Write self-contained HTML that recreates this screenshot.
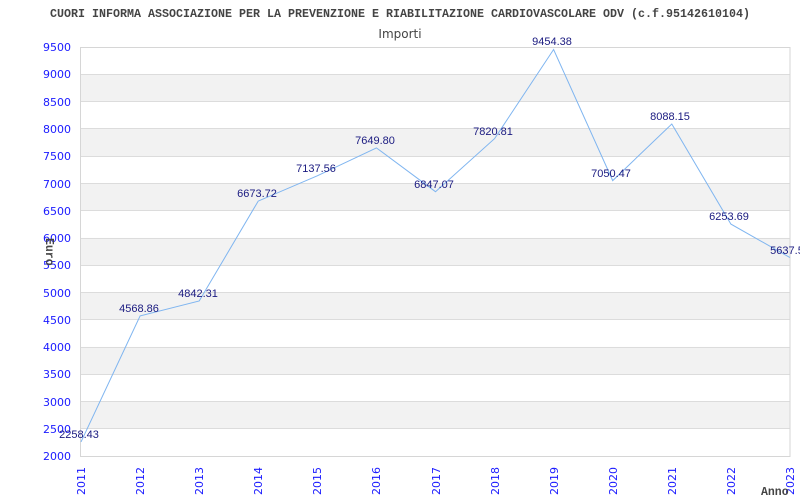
<!DOCTYPE html>
<html><head><meta charset="utf-8"><style>
html,body{margin:0;padding:0;background:#fff;}
svg{display:block;}
</style></head><body>
<svg width="800" height="500" xmlns="http://www.w3.org/2000/svg">
<rect width="800" height="500" fill="#fff"/>
<g fill="#f2f2f2">
<rect x="81" y="74.3" width="709" height="27.3"/>
<rect x="81" y="128.8" width="709" height="27.3"/>
<rect x="81" y="183.3" width="709" height="27.3"/>
<rect x="81" y="237.9" width="709" height="27.3"/>
<rect x="81" y="292.4" width="709" height="27.3"/>
<rect x="81" y="346.9" width="709" height="27.3"/>
<rect x="81" y="401.5" width="709" height="27.3"/>
</g>
<g stroke="#dcdcdc" stroke-width="1">
<line x1="81" x2="790" y1="74.5" y2="74.5"/><line x1="81" x2="790" y1="101.5" y2="101.5"/>
<line x1="81" x2="790" y1="128.5" y2="128.5"/><line x1="81" x2="790" y1="156.5" y2="156.5"/>
<line x1="81" x2="790" y1="183.5" y2="183.5"/><line x1="81" x2="790" y1="210.5" y2="210.5"/>
<line x1="81" x2="790" y1="238.5" y2="238.5"/><line x1="81" x2="790" y1="265.5" y2="265.5"/>
<line x1="81" x2="790" y1="292.5" y2="292.5"/><line x1="81" x2="790" y1="319.5" y2="319.5"/>
<line x1="81" x2="790" y1="347.5" y2="347.5"/><line x1="81" x2="790" y1="374.5" y2="374.5"/>
<line x1="81" x2="790" y1="401.5" y2="401.5"/><line x1="81" x2="790" y1="428.5" y2="428.5"/>
</g>
<rect x="80.5" y="47.5" width="709.5" height="409" fill="none" stroke="#d6d6d6"/>
<text x="400" y="17" text-anchor="middle" font-family="Liberation Mono, monospace" font-size="11.8" font-weight="bold" fill="#444" textLength="700" lengthAdjust="spacingAndGlyphs">CUORI INFORMA ASSOCIAZIONE PER LA PREVENZIONE E RIABILITAZIONE CARDIOVASCOLARE ODV (c.f.95142610104)</text>
<text x="400" y="38" text-anchor="middle" font-family="DejaVu Sans, sans-serif" font-size="12" fill="#444">Importi</text>
<g font-family="DejaVu Sans, sans-serif" font-size="11" fill="#1a1aff" text-anchor="end">
<text x="71" y="51">9500</text><text x="71" y="78">9000</text><text x="71" y="106">8500</text>
<text x="71" y="133">8000</text><text x="71" y="160">7500</text><text x="71" y="188">7000</text>
<text x="71" y="215">6500</text><text x="71" y="242">6000</text><text x="71" y="269">5500</text>
<text x="71" y="297">5000</text><text x="71" y="324">4500</text><text x="71" y="351">4000</text>
<text x="71" y="378">3500</text><text x="71" y="406">3000</text><text x="71" y="433">2500</text>
<text x="71" y="460">2000</text>
</g>
<g font-family="DejaVu Sans, sans-serif" font-size="11" fill="#1a1aff">
<text transform="translate(85,495) rotate(-90)">2011</text>
<text transform="translate(144,495) rotate(-90)">2012</text>
<text transform="translate(203,495) rotate(-90)">2013</text>
<text transform="translate(262,495) rotate(-90)">2014</text>
<text transform="translate(321,495) rotate(-90)">2015</text>
<text transform="translate(380,495) rotate(-90)">2016</text>
<text transform="translate(440,495) rotate(-90)">2017</text>
<text transform="translate(499,495) rotate(-90)">2018</text>
<text transform="translate(558,495) rotate(-90)">2019</text>
<text transform="translate(617,495) rotate(-90)">2020</text>
<text transform="translate(676,495) rotate(-90)">2021</text>
<text transform="translate(735,495) rotate(-90)">2022</text>
<text transform="translate(794,495) rotate(-90)">2023</text>
</g>
<text x="761" y="495" font-family="Liberation Mono, monospace" font-size="11.5" font-weight="bold" fill="#444">Anno</text>
<text transform="translate(46,238) rotate(90)" font-family="Liberation Mono, monospace" font-size="11.5" font-weight="bold" fill="#444">Euro</text>
<polyline fill="none" stroke="#7fb5f0" stroke-width="1" points="81,441.9 140.1,315.9 199.2,301 258.2,201.1 317.3,175.8 376.4,147.9 435.5,191.7 494.6,138.6 553.6,49.5 612.7,180.6 671.8,124 730.9,224.1 790,257.6"/>
<g font-family="Liberation Sans, sans-serif" font-size="11" fill="#1a1a80" text-anchor="middle">
<text x="79" y="438">2258.43</text>
<text x="139" y="312">4568.86</text>
<text x="198" y="297">4842.31</text>
<text x="257" y="197">6673.72</text>
<text x="316" y="172">7137.56</text>
<text x="375" y="144">7649.80</text>
<text x="434" y="188">6847.07</text>
<text x="493" y="135">7820.81</text>
<text x="552" y="45">9454.38</text>
<text x="611" y="177">7050.47</text>
<text x="670" y="120">8088.15</text>
<text x="729" y="220">6253.69</text>
<text x="787" y="254">5637.5</text>
</g>
</svg>
</body></html>
